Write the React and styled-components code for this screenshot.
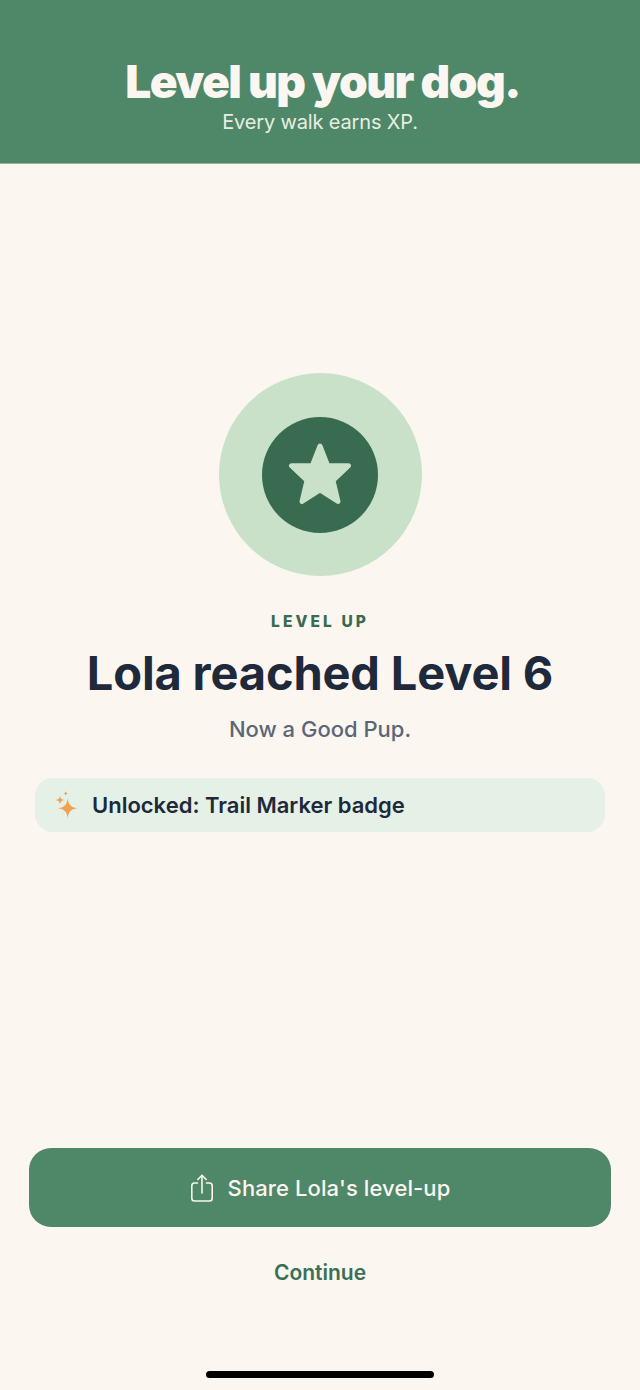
import React from "react";
import styled, { createGlobalStyle } from "styled-components";

const GlobalStyle = createGlobalStyle`
  html, body {
    margin: 0;
    padding: 0;
    background: #fbf6ef;
  }
  * {
    box-sizing: border-box;
  }
`;

function StarIcon() {
  return (
    <svg
      width="64"
      height="64"
      viewBox="0 0 64 64"
      fill="#c9e1c9"
      stroke="#c9e1c9"
      strokeWidth="5"
      strokeLinejoin="round"
    >
      <polygon points="32,3 39.8,22.8 60.5,22.8 45,37.5 50,58.5 32,47 14,58.5 19,37.5 3.5,22.8 24.2,22.8" />
    </svg>
  );
}

function SparklesIcon() {
  return (
    <svg width="24" height="28" viewBox="0 0 24 28" fill="#f0a254">
      <path d="M13.700 7.300c.8 6.300 3 9 9.500 10-6.500 1-8.700 3.700-9.500 10-.8-6.300-3-9-9.500-10 6.500-1 8.700-3.700 9.500-10z" />
      <path d="M6 4.500c.4 3 1.500 4.100 4.500 4.500-3 .4-4.100 1.500-4.500 4.500-.4-3-1.500-4.100-4.500-4.500 3-.4 4.100-1.500 4.500-4.500z" />
      <path d="M11.700 0c.2 1.700.8 2.300 2.500 2.500-1.700.2-2.300.8-2.500 2.500-.2-1.700-.8-2.300-2.500-2.500 1.700-.2 2.300-.8 2.500-2.500z" />
    </svg>
  );
}

function ShareIcon() {
  return (
    <svg
      width="24"
      height="28"
      viewBox="0 0 24 28"
      fill="none"
      stroke="#fbf6ef"
      strokeWidth="1.600"
      strokeLinecap="round"
      strokeLinejoin="round"
    >
      <path d="M7.500 9H4.500C2.600 9 1.800 9.900 1.800 11.700v12.600c0 1.800.8 2.700 2.700 2.700h15c1.900 0 2.700-.9 2.700-2.700V11.700C22.200 9.900 21.400 9 19.500 9h-3" />
      <path d="M12 19V1.500" />
      <path d="M7.800 5.500 12 1.300l4.200 4.200" />
    </svg>
  );
}

export default function App() {
  return (
    <Screen>
      <GlobalStyle />
      <Header>
        <Headline>Level up your dog.</Headline>
        <Tagline>Every walk earns XP.</Tagline>
      </Header>
      <Main>
        <Ring>
          <Disc>
            <StarIcon />
          </Disc>
        </Ring>
        <Eyebrow>LEVEL UP</Eyebrow>
        <Title>Lola reached Level 6</Title>
        <Subtitle>Now a Good Pup.</Subtitle>
        <Banner>
          <SparklesIcon />
          <BannerText>Unlocked: Trail Marker badge</BannerText>
        </Banner>
      </Main>
      <Actions>
        <ShareButton>
          <ShareIcon />
          Share Lola's level-up
        </ShareButton>
        <ContinueButton>Continue</ContinueButton>
      </Actions>
      <HomeBar />
    </Screen>
  );
}

const Screen = styled.div`
  width: 640px;
  height: 1390px;
  display: flex;
  flex-direction: column;
  align-items: center;
  overflow: hidden;
  background: #fbf6ef;
  font-family: Inter, "Liberation Sans", sans-serif;
`;

const Header = styled.header`
  width: 100%;
  height: 164px;
  padding-top: 56px;
  display: flex;
  flex-direction: column;
  align-items: center;
  background: #4f8769;
  border-bottom: 1px solid #8fb39d;
`;

const Headline = styled.h1`
  margin: 0 0 0 5px;
  font-size: 46px;
  line-height: 50px;
  font-weight: 900;
  letter-spacing: -1.55px;
  color: #fbf6ef;
`;

const Tagline = styled.p`
  margin: 2px 0 0;
  font-size: 20px;
  line-height: 28px;
  font-weight: 400;
  letter-spacing: -0.15px;
  color: #e8eee0;
`;

const Main = styled.main`
  width: 100%;
  padding: 209px 35px 0;
  display: flex;
  flex-direction: column;
  align-items: center;
`;

const Ring = styled.div`
  width: 203px;
  height: 203px;
  display: flex;
  align-items: center;
  justify-content: center;
  border-radius: 50%;
  background: #c9e1c9;
`;

const Disc = styled.div`
  width: 116px;
  height: 116px;
  display: flex;
  align-items: center;
  justify-content: center;
  border-radius: 50%;
  background: #386b50;
`;

const Eyebrow = styled.div`
  margin-top: 36px;
  font-size: 15.5px;
  line-height: 20px;
  font-weight: 800;
  letter-spacing: 3.1px;
  color: #386b50;
`;

const Title = styled.h2`
  margin: 13px 0 0;
  font-size: 47px;
  line-height: 56px;
  font-weight: 700;
  letter-spacing: -0.15px;
  color: #1e293b;
`;

const Subtitle = styled.p`
  margin: 13px 0 0;
  font-size: 22px;
  line-height: 30px;
  font-weight: 500;
  color: #5b6778;
`;

const Banner = styled.div`
  width: 570px;
  height: 54px;
  margin-top: 34px;
  padding: 0 19px;
  display: flex;
  align-items: center;
  gap: 14px;
  border-radius: 18px;
  background: #e5f0e7;
`;

const BannerText = styled.span`
  font-size: 22px;
  line-height: 30px;
  font-weight: 600;
  color: #1e293b;
`;

const Actions = styled.div`
  width: 100%;
  margin-top: 316px;
  display: flex;
  flex-direction: column;
  align-items: center;
`;

const ShareButton = styled.button`
  width: 582px;
  height: 79px;
  padding: 0;
  display: flex;
  align-items: center;
  justify-content: center;
  gap: 14px;
  border: none;
  border-radius: 22px;
  background: #4f8769;
  font-family: inherit;
  font-size: 22px;
  font-weight: 500;
  letter-spacing: 0.1px;
  color: #fbf6ef;
`;

const ContinueButton = styled.button`
  margin-top: 31px;
  padding: 0;
  border: none;
  background: none;
  font-family: inherit;
  font-size: 21px;
  line-height: 30px;
  font-weight: 600;
  color: #3a7055;
`;

const HomeBar = styled.div`
  width: 228px;
  height: 7px;
  margin-top: 83px;
  border-radius: 4px;
  background: #000;
`;
